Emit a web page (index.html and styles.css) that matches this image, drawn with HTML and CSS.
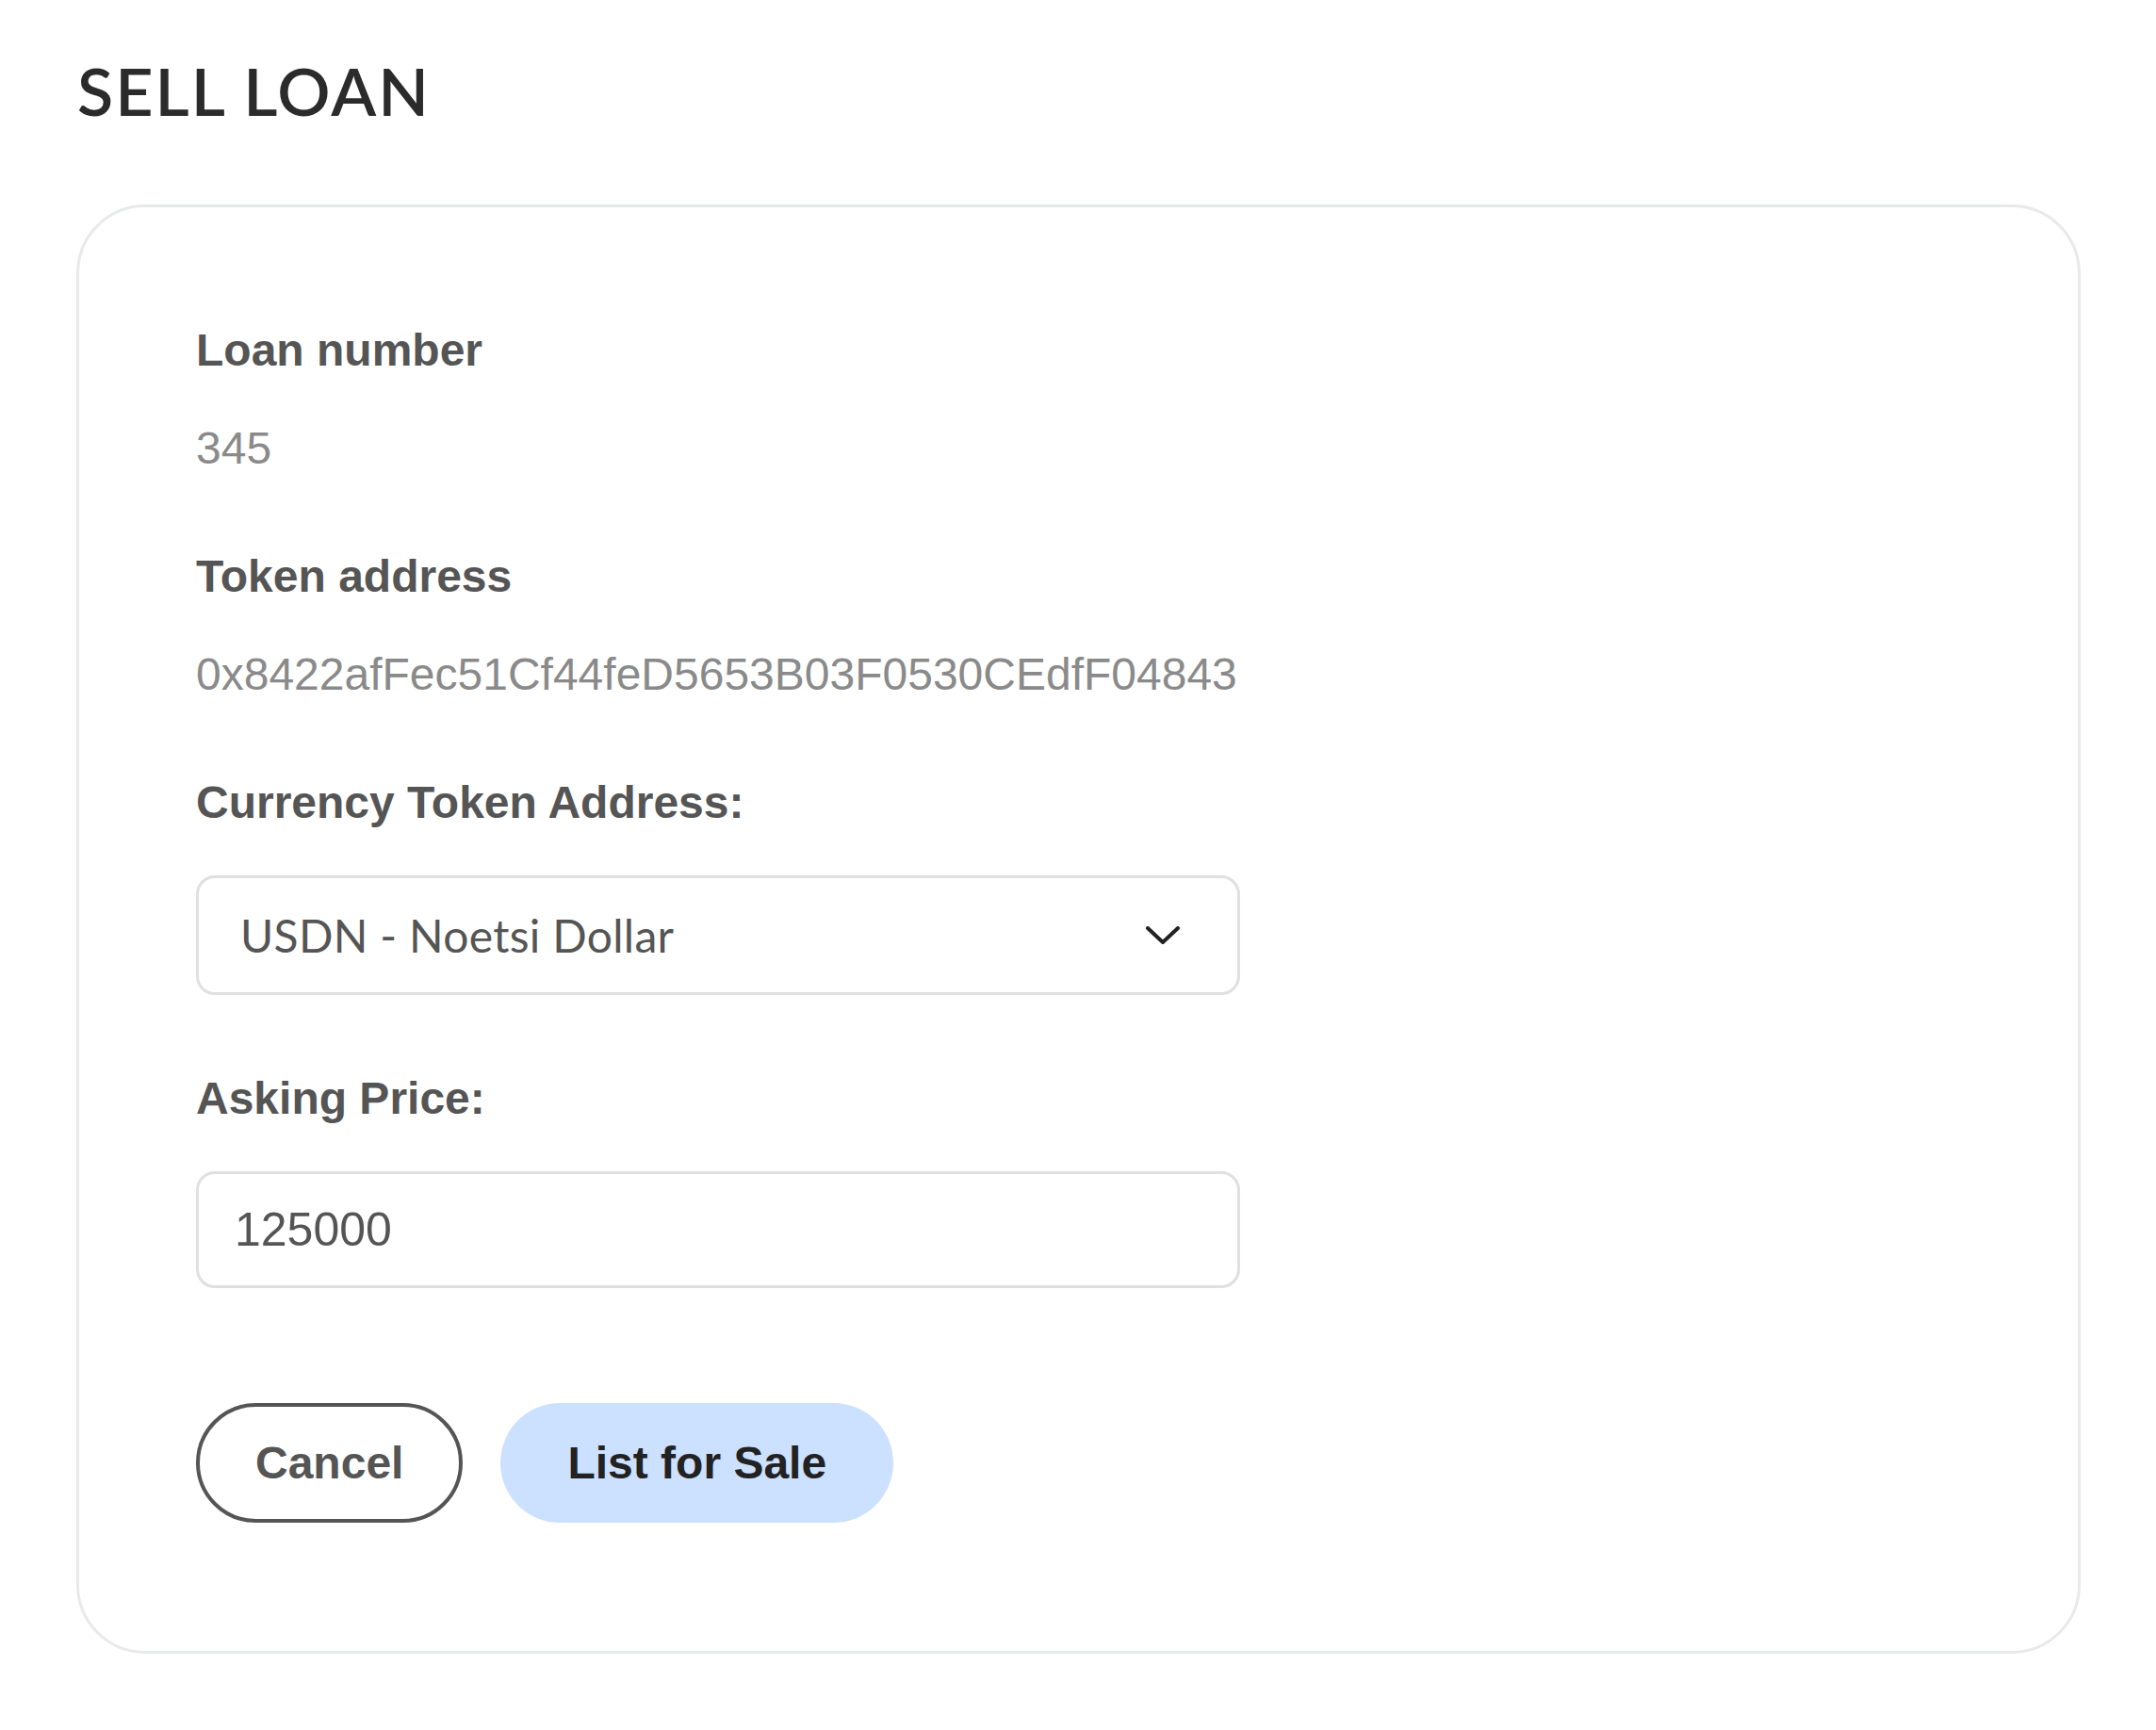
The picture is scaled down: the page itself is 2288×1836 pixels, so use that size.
FILE: index.html
```html
<!DOCTYPE html>
<html lang="en">
<head>
<meta charset="utf-8">
<title>Sell Loan</title>
<link rel="stylesheet" href="styles.css">
</head>
<body>
<main class="page">
  <h1 class="title">SELL LOAN</h1>
  <section class="card">
    <div class="field">
      <div class="label">Loan number</div>
      <div class="value">345</div>
    </div>
    <div class="field">
      <div class="label">Token address</div>
      <div class="value">0x8422afFec51Cf44feD5653B03F0530CEdfF04843</div>
    </div>
    <div class="field">
      <div class="label">Currency Token Address:</div>
      <div class="select">
        <span class="select-text">USDN - Noetsi Dollar</span>
        <svg class="chevron" width="36" height="20" viewBox="0 0 36 20"><polyline points="2,2 18,17 34,2" fill="none" stroke="#222" stroke-width="4" stroke-linecap="round" stroke-linejoin="round"/></svg>
      </div>
    </div>
    <div class="field">
      <div class="label">Asking Price:</div>
      <input class="input" type="text" value="125000">
    </div>
    <div class="actions">
      <button class="btn btn-cancel">Cancel</button>
      <button class="btn btn-primary">List for Sale</button>
    </div>
  </section>
</main>
</body>
</html>
```

FILE: styles.css
```css
html, body {
  margin: 0;
  padding: 0;
  background: #ffffff;
}

.page {
  padding: 61px 80px 0 81px;
}

.title {
  margin: 0 0 86px 1px;
  font-family: "Lato", "Liberation Sans", sans-serif;
  font-weight: 600;
  font-size: 70px;
  line-height: 70px;
  letter-spacing: 2px;
  color: #2b2b2b;
}

.card {
  border: 3px solid #e8e9eb;
  border-radius: 73px;
  padding: 126px 124px 136px 124px;
  display: flex;
  flex-direction: column;
  gap: 84px;
}

.field {
  display: flex;
  flex-direction: column;
  gap: 51px;
}

.label {
  font-family: "Liberation Sans", Arial, sans-serif;
  font-weight: 700;
  font-size: 48px;
  line-height: 52px;
  color: #555555;
}

.value {
  font-family: "Liberation Sans", Arial, sans-serif;
  font-size: 48px;
  line-height: 53px;
  color: #8a8a8a;
}

.select {
  box-sizing: border-box;
  width: 1108px;
  height: 127px;
  border: 3px solid #e0e0e0;
  border-radius: 20px;
  padding: 0 61px 0 44px;
  display: flex;
  align-items: center;
  justify-content: space-between;
}

.select-text {
  font-family: "Lato", "Liberation Sans", sans-serif;
  font-size: 48px;
  letter-spacing: 0.3px;
  color: #555555;
}

.chevron {
  display: block;
}

.input {
  box-sizing: border-box;
  width: 1108px;
  height: 124px;
  border: 3px solid #e0e0e0;
  border-radius: 20px;
  padding: 0 38px;
  font-family: "Liberation Sans", Arial, sans-serif;
  font-size: 50px;
  color: #555555;
  background: #ffffff;
  outline: none;
}

.actions {
  display: flex;
  gap: 40px;
  margin-top: 38px;
}

.btn {
  box-sizing: border-box;
  height: 127px;
  border-radius: 64px;
  font-family: "Liberation Sans", Arial, sans-serif;
  font-weight: 700;
  cursor: pointer;
}

.btn-cancel {
  border: 4px solid #555555;
  background: #ffffff;
  color: #555555;
  font-size: 48px;
  padding: 0 59px;
}

.btn-primary {
  border: none;
  background: #cce0ff;
  color: #222222;
  font-size: 48px;
  padding: 0 71px;
}
```
